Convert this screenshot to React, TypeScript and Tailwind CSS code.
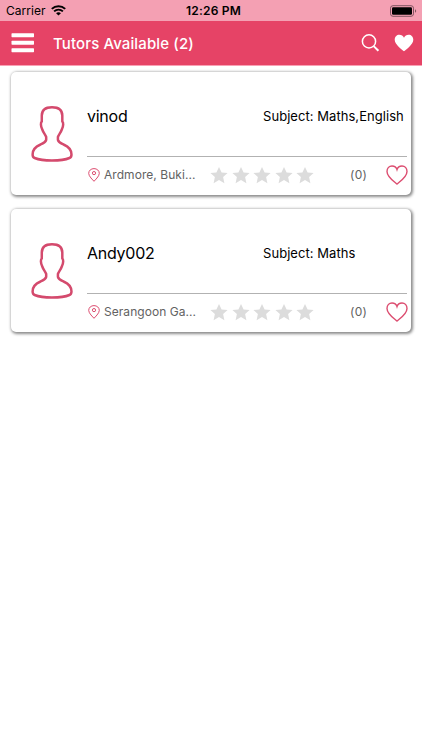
import React from "react";

type Tutor = { name: string; subjects: string; area: string; reviews: number };

const tutors: Tutor[] = [
  { name: "vinod", subjects: "Maths,English", area: "Ardmore, Buki...", reviews: 0 },
  { name: "Andy002", subjects: "Maths", area: "Serangoon Ga...", reviews: 0 },
];

function StatusBar() {
  return (
    <div className="grid h-[21px] grid-cols-3 items-center bg-[#f4a0b3] pl-[6px] pr-[5px] text-black">
      <div className="flex items-center gap-[5px]">
        <span className="text-[12px] leading-[20px] tracking-[0.05px]">Carrier</span>
        <svg width="15" height="11" viewBox="0 0 15 11" fill="none" stroke="black">
          <path d="M0.8 3.9C4.6 0.2 10.4 0.2 14.2 3.9" strokeWidth="2" />
          <path d="M3.1 6.4C5.6 4 9.4 4 11.9 6.4" strokeWidth="1.9" />
          <path d="M7.5 10.6L5.1 8.2C6.4 7 8.6 7 9.9 8.2Z" fill="black" stroke="none" />
        </svg>
      </div>
      <span className="whitespace-nowrap pl-[4px] pt-[1px] text-center text-[12px] font-semibold leading-[20px] tracking-[0.2px]">12:26 PM</span>
      <svg className="justify-self-end" width="27" height="12" viewBox="0 0 27 12">
        <rect x="0.5" y="0.7" width="23" height="10.6" rx="2.5" fill="none" stroke="#805460" />
        <rect x="2" y="2.2" width="20" height="7.6" rx="1.2" fill="black" />
        <path d="M25 4.2C26.6 4.8 26.6 7.2 25 7.8Z" fill="#805460" />
      </svg>
    </div>
  );
}

function Header() {
  return (
    <header className="flex h-[45px] items-center border-b border-[#f9a0b4] bg-[#e64366] pl-[11px] pr-[8px] text-white">
      <svg width="24" height="20" viewBox="0 0 24 20" fill="white">
        <rect x="0.5" y="0.3" width="22.5" height="3.9" rx="0.6" />
        <rect x="0.5" y="7.8" width="22.5" height="3.9" rx="0.6" />
        <rect x="0.5" y="15.3" width="22.5" height="3.9" rx="0.6" />
      </svg>
      <h1 className="ml-[18px] flex-1 pt-[1px] text-[15px] font-medium leading-[22px] tracking-[0.12px]">Tutors Available (2)</h1>
      <svg className="mr-[13px]" width="20" height="20" viewBox="0 0 20 20" fill="none" stroke="white">
        <circle cx="8" cy="8.4" r="6.6" strokeWidth="1.5" />
        <path d="M12.7 13.1L17.4 17.8" strokeWidth="2" />
      </svg>
      <svg width="20" height="18" viewBox="0 0 20 18" fill="white">
        <path d="M10 17.3C8.7 16.2 0.7 10.8 0.7 5.7C0.7 2.7 2.8 0.7 5.3 0.7C7.4 0.7 9.2 1.9 10 3.8C10.8 1.9 12.6 0.7 14.7 0.7C17.2 0.7 19.3 2.7 19.3 5.7C19.3 10.8 11.3 16.2 10 17.3Z" />
      </svg>
    </header>
  );
}

function Avatar() {
  return (
    <svg width="42" height="57" viewBox="0 0 44 57" preserveAspectRatio="none" fill="none" stroke="#d44a6d" strokeWidth="2.6" strokeLinejoin="round">
      <path d="M22 2.2C14.5 2.2 11.3 5.2 11.3 10.5V16.5C10 17.5 10.1 21 11.6 24C12.8 27.5 15.2 29.8 15.9 32V34.8C15.2 37.4 12.9 38.1 9.5 39.7C4.7 41.7 1.8 44.3 1.7 49.2C1.6 51.2 1.9 52.3 3.8 53C8.2 54.7 14 55.5 22 55.5C30 55.5 36.2 54.7 40.3 53C42.2 52.3 42.5 51.2 42.4 49.2C42.2 44.3 39.4 41.7 34.6 39.7C31.2 38.1 28.9 37.4 28.2 34.8V32C28.9 29.8 31.3 27.5 32.5 24C34 21 34.1 17.5 32.8 16.5V10.5C32.8 5.2 29.5 2.2 22 2.2Z" />
    </svg>
  );
}

function Stars() {
  return (
    <div className="flex w-[104px] shrink-0 justify-between">
      {[0, 1, 2, 3, 4].map((n) => (
        <svg key={n} width="18" height="17" viewBox="0 0 18 17" fill="#dcdcdc">
          <path d="M9 0L11.6 5.4L17.6 6.1L13.1 10L14.4 16.2L9 13.1L3.6 16.2L4.9 10L0.4 6.1L6.4 5.4Z" />
        </svg>
      ))}
    </div>
  );
}

function TutorCard({ tutor }: { tutor: Tutor }) {
  return (
    <article className="flex h-[123px] rounded-[5px] bg-white pr-[3px] shadow-[1px_1px_3px_1px_rgba(0,0,0,0.46)]">
      <div className="w-[76px] shrink-0 pl-[20px] pt-[33px]">
        <Avatar />
      </div>
      <div className="flex min-w-0 flex-1 flex-col">
        <div className="mr-[1px] flex h-[85px] items-center border-b border-[#b2b2b2] pt-[4px] text-black">
          <h2 className="w-[176px] shrink-0 text-[16px] leading-[20px] tracking-[-0.25px]">{tutor.name}</h2>
          <p className="whitespace-nowrap text-[13px] leading-[20px] tracking-[0.05px]">Subject: {tutor.subjects}</p>
        </div>
        <div className="flex h-[36px] items-center text-[#626262]">
          <svg className="ml-[1px] shrink-0" width="12" height="14" viewBox="0 0 12 14" fill="none" stroke="#dc4d70">
            <path d="M6 13.3C5 12.1 0.7 8.3 0.7 5.4C0.7 2.6 3 0.6 6 0.6C9 0.6 11.3 2.6 11.3 5.4C11.3 8.3 7 12.1 6 13.3Z" />
            <circle cx="6" cy="5.1" r="1.6" />
          </svg>
          <span className="ml-[4px] w-[106px] shrink-0 whitespace-nowrap text-[12px] leading-[18px] tracking-[0.05px]">{tutor.area}</span>
          <Stars />
          <span className="ml-[36px] w-[36px] shrink-0 text-[12px] leading-[18px] tracking-[0.3px]">({tutor.reviews})</span>
          <svg className="shrink-0" width="22" height="20" viewBox="0 0 22 20" fill="none" stroke="#dc4d70" strokeWidth="1.4">
            <path d="M11 19C9.5 17.6 1 12.2 1 6.4C1 3.2 3.2 1 6 1C8.5 1 10.3 2.4 11 4.6C11.7 2.4 13.5 1 16 1C18.8 1 21 3.2 21 6.4C21 12.2 12.5 17.6 11 19Z" />
          </svg>
        </div>
      </div>
    </article>
  );
}

export default function App() {
  return (
    <div className="min-h-screen w-full bg-white font-['Inter','Liberation_Sans',sans-serif]">
      <StatusBar />
      <Header />
      <main className="flex flex-col gap-[14px] pl-[11px] pr-[11px] pt-[6px]">
        {tutors.map((tutor) => (
          <TutorCard key={tutor.name} tutor={tutor} />
        ))}
      </main>
    </div>
  );
}
